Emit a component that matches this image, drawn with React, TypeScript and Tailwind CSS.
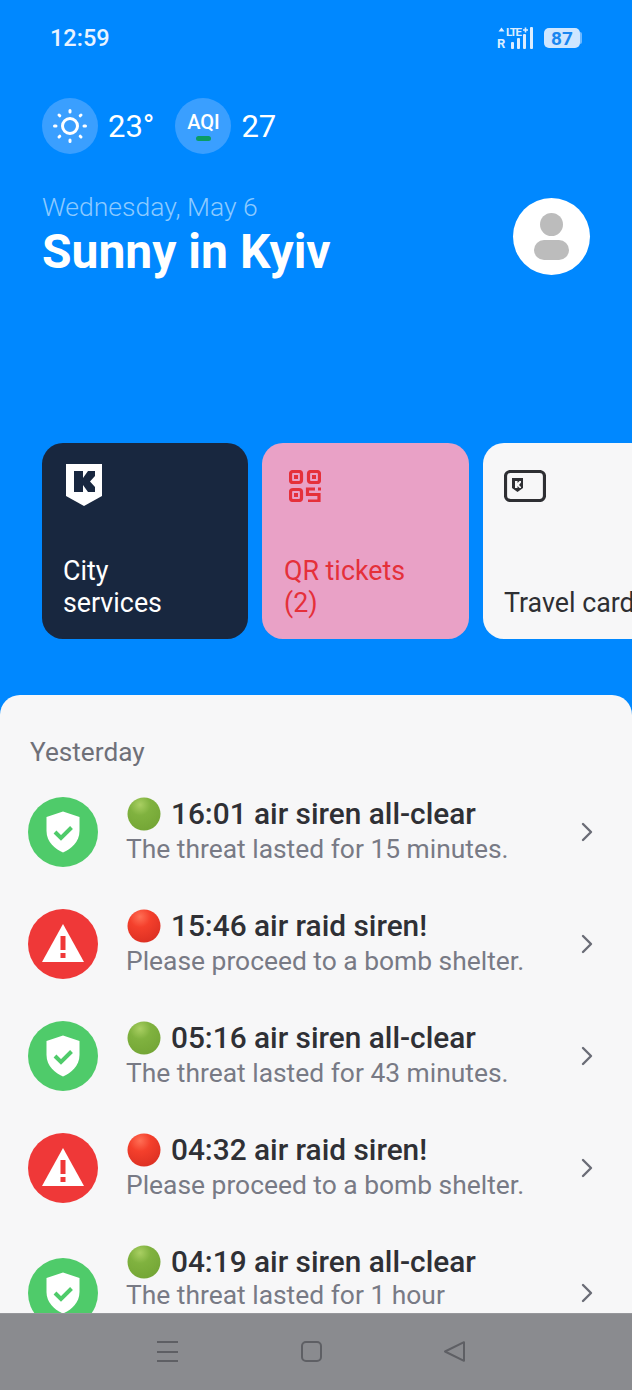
import { ChevronRight } from "lucide-react";

const alerts = [
  { ok: true, title: "16:01 air siren all-clear", sub: "The threat lasted for 15 minutes." },
  { ok: false, title: "15:46 air raid siren!", sub: "Please proceed to a bomb shelter." },
  { ok: true, title: "05:16 air siren all-clear", sub: "The threat lasted for 43 minutes." },
  { ok: false, title: "04:32 air raid siren!", sub: "Please proceed to a bomb shelter." },
  { ok: true, title: "04:19 air siren all-clear", sub: "The threat lasted for 1 hour", tall: true },
];

function Dot({ ok }: { ok: boolean }) {
  const id = ok ? "dot-green" : "dot-red";
  return (
    <svg viewBox="0 0 34 34" className="inline-block h-[34px] w-[34px] shrink-0">
      <defs>
        <radialGradient id={id} cx="0.38" cy="0.22" r="0.8">
          <stop offset="0" stopColor={ok ? "#a9cf62" : "#ff6f55"} />
          <stop offset="0.4" stopColor={ok ? "#80b23f" : "#f4402c"} />
          <stop offset="1" stopColor={ok ? "#74a636" : "#dd3023"} />
        </radialGradient>
      </defs>
      <circle cx="17" cy="17" r="16.5" fill={`url(#${id})`} />
    </svg>
  );
}

function ShieldBadge() {
  return (
    <div className="flex h-[70px] w-[70px] shrink-0 items-center justify-center rounded-full bg-[#4fcb6a]">
      <svg viewBox="0 0 34 42" className="h-[42px] w-[34px]">
        <path d="M17 0.5 L33.5 6 V20 C33.5 31 25 38 17 41.5 C9 38 0.5 31 0.5 20 V6 Z" fill="#fff" />
        <path d="M9 21 L15 27 L25.5 16.5" fill="none" stroke="#4fcb6a" strokeWidth="4" />
      </svg>
    </div>
  );
}

function WarnBadge() {
  return (
    <div className="flex h-[70px] w-[70px] shrink-0 items-center justify-center rounded-full bg-[#ef3838]">
      <svg viewBox="0 0 42 38" className="mb-[3px] h-[38px] w-[42px]">
        <path d="M21 0 L42 38 H0 Z" fill="#fff" />
        <rect x="18.5" y="12" width="5" height="14" fill="#ef3838" />
        <rect x="18.5" y="29" width="5" height="5" fill="#ef3838" />
      </svg>
    </div>
  );
}

export default function App() {
  return (
    <div className="flex h-[1390px] w-[632px] flex-col overflow-hidden bg-[#0088ff] font-['Roboto',sans-serif]">
      {/* status bar */}
      <div className="flex h-[76px] shrink-0 items-center justify-between pl-[50px] pr-[50px]">
        <span className="mt-[1px] text-[23.5px] font-medium leading-none text-[#e8f3ff]">12:59</span>
        <div className="flex items-center gap-[9px]">
          <svg viewBox="0 0 38 24" className="h-[24px] w-[38px]" fill="#dcedff">
            <path d="M1.5 5.5 L4.5 1.5 L7.5 5.5 Z" />
            <text x="9" y="9.5" fontSize="11.5" fontWeight="700" fontFamily="Roboto" textLength="16">LTE</text>
            <path d="M26 4h5M28.5 1.5v5" stroke="#dcedff" strokeWidth="1.6" />
            <text x="0" y="22" fontSize="13" fontWeight="700" fontFamily="Roboto">R</text>
            <rect x="14" y="16" width="3" height="7" rx="1" />
            <rect x="20" y="12" width="3" height="11" rx="1" />
            <rect x="26" y="8" width="3" height="15" rx="1" />
            <rect x="33" y="1" width="3" height="22" rx="1" />
          </svg>
          <div className="flex items-center">
            <div className="flex h-[20px] w-[36px] items-center justify-center rounded-[5px] bg-[#cfe6ff] text-[19px] font-bold leading-none text-[#1a86f0]">87</div>
            <div className="h-[12px] w-[2px] rounded-r-sm bg-[#6db8ff]" />
          </div>
        </div>
      </div>

      {/* weather */}
      <div className="mt-[22px] flex shrink-0 items-center pl-[42px] text-white">
        <div className="flex h-[56px] w-[56px] items-center justify-center rounded-full bg-[#3a9fff]">
          <svg viewBox="0 0 36 36" className="h-[36px] w-[36px]" fill="none" stroke="#fff" strokeLinecap="round">
            <circle cx="18" cy="18" r="7.5" strokeWidth="3" />
            <path d="M18 2.5v1.5M18 32v1.5M2.5 18H4M32 18h1.5M7 7l.8.8M28.2 28.2l.8.8M7 29l.8-.8M28.2 7.8l.8-.8" strokeWidth="3" />
          </svg>
        </div>
        <span className="ml-[10px] text-[31px] leading-none">23°</span>
        <div className="ml-[21px] flex h-[56px] w-[56px] flex-col items-center justify-center rounded-full bg-[#3a9fff]">
          <span className="text-[20px] font-medium leading-[20px]">AQI</span>
          <div className="mt-[4px] h-[5px] w-[15px] rounded-sm bg-[#0b9c63]" />
        </div>
        <span className="ml-[10px] text-[31px] leading-none">27</span>
      </div>

      {/* greeting */}
      <div className="mt-[38px] flex shrink-0 items-start justify-between pl-[42px] pr-[42px]">
        <div>
          <div className="text-[26.5px] font-light leading-[30px] text-[#8ccaff]">Wednesday, May 6</div>
          <div className="mt-[3px] text-[48px] font-bold leading-[54px] text-white">Sunny in Kyiv</div>
        </div>
        <div className="mt-[6px] flex h-[77px] w-[77px] flex-col items-center justify-center rounded-full bg-white">
          <div className="h-[23px] w-[23px] rounded-full bg-[#bcbcbc]" />
          <div className="mt-[4px] h-[20px] w-[35px] rounded-full bg-[#bcbcbc]" />
        </div>
      </div>

      {/* shortcut cards */}
      <div className="mt-[164px] flex shrink-0 gap-[14px] pl-[42px]">
        <div className="flex h-[196px] w-[206px] shrink-0 flex-col justify-between rounded-[21px] bg-[#18273f] pb-[20px] pl-[21px] pr-[12px] pt-[21px] text-white">
          <svg viewBox="0 0 36 42" className="ml-[3px] h-[42px] w-[36px]">
            <path d="M0 0H36V32L18 42L0 32Z" fill="#fff" />
            <path d="M8 7H17V14L22 7H29V12L24 17.5L29 23V28H22L17 21V28H8Z" fill="#18273f" />
          </svg>
          <div className="text-[26.8px] font-[450] leading-[32px]">City<br />services</div>
        </div>
        <div className="flex h-[196px] w-[207px] shrink-0 flex-col justify-between rounded-[21px] bg-[#e9a1c6] pb-[20px] pl-[22px] pr-[12px] pt-[27px] text-[#e5303a]">
          <svg viewBox="0 0 32 32" className="ml-[5px] h-[32px] w-[32px]" fill="none" stroke="#e5303a" strokeWidth="3.2">
            <rect x="1.5" y="1.5" width="11" height="11" rx="2.5" />
            <rect x="19.5" y="1.5" width="11" height="11" rx="2.5" />
            <rect x="1.5" y="19.5" width="11" height="11" rx="2.5" />
            <rect x="5" y="5" width="4" height="4" fill="#e5303a" strokeWidth="0" />
            <rect x="23" y="5" width="4" height="4" fill="#e5303a" strokeWidth="0" />
            <rect x="5" y="23" width="4" height="4" fill="#e5303a" strokeWidth="0" />
            <path d="M26 19H18.5V24.5H30V31H19M29 19H32" />
          </svg>
          <div className="text-[26.8px] font-[450] leading-[32px]">QR tickets<br />(2)</div>
        </div>
        <div className="flex h-[196px] w-[207px] shrink-0 flex-col justify-between rounded-[21px] bg-[#f7f7f8] pb-[20px] pl-[21px] pt-[27px] text-[#2e2f33]">
          <svg viewBox="0 0 42 32" className="h-[32px] w-[42px]">
            <rect x="1.5" y="1.5" width="39" height="29" rx="5" fill="none" stroke="#2e2f33" strokeWidth="3.2" />
            <path d="M8 8H19V18L13.5 22L8 18Z" fill="#2e2f33" />
            <path d="M11 11H13.5V13L15.5 11H17V12.5L15 15L17 17V18H15.5L13.5 16V18H11Z" fill="#f7f7f8" />
          </svg>
          <div className="whitespace-nowrap text-[26.8px] font-[450] leading-[32px]">Travel card</div>
        </div>
      </div>

      {/* alerts sheet */}
      <div className="mt-[56px] min-h-0 flex-1 overflow-hidden rounded-t-[20px] bg-[#f7f7f8] pl-[28px] pr-[29px]">
        <div className="mt-[41px] pl-[2px] text-[26.2px] leading-[32px] text-[#6f7078]">Yesterday</div>
        <div className="mt-[8px]">
          {alerts.map((a) => (
            <div key={a.title} className={a.tall ? "flex h-[138px] items-center" : "flex h-[112px] items-center"}>
              {a.ok ? <ShieldBadge /> : <WarnBadge />}
              <div className={a.tall ? "ml-[29px] min-w-0 flex-1 pb-[28px]" : "ml-[29px] min-w-0 flex-1"}>
                <div className="-mt-[3px] flex h-[36px] items-center gap-[10px] text-[29.8px] font-medium leading-[36px] text-[#2f3035]">
                  <Dot ok={a.ok} />
                  <span>{a.title}</span>
                </div>
                <div className={a.tall ? "-ml-[1px] -mt-[1px] text-[26.4px] leading-[33px] text-[#787a85]" : "-ml-[1px] mt-[1px] text-[26.4px] leading-[33px] text-[#787a85]"}>{a.sub}</div>
              </div>
              <ChevronRight className="h-[32px] w-[32px] shrink-0 text-[#6a6c76]" strokeWidth={1.8} />
            </div>
          ))}
        </div>
      </div>

      {/* nav bar */}
      <div className="flex h-[77px] shrink-0 items-start border-t border-[#96979b] bg-[#8a8b8f] pt-[27px]">
        <div className="ml-[157px] flex h-[21px] w-[21px] flex-col justify-between">
          <div className="h-[2px] bg-[#5e5f64]" />
          <div className="h-[2px] bg-[#5e5f64]" />
          <div className="h-[2px] bg-[#5e5f64]" />
        </div>
        <div className="ml-[123px] h-[21px] w-[21px] rounded-[5px] border-2 border-[#5e5f64]" />
        <svg viewBox="0 0 21 21" className="ml-[122px] h-[21px] w-[21px]" fill="none" stroke="#5e5f64" strokeWidth="2" strokeLinejoin="round">
          <path d="M1 10.5 L20 1.2 V19.8 Z" />
        </svg>
      </div>
    </div>
  );
}
